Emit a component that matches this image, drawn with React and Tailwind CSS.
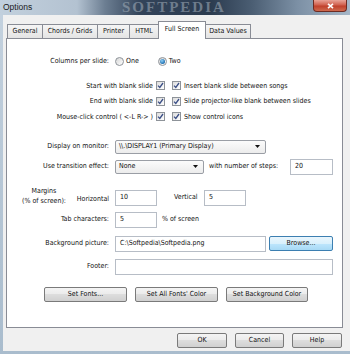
import React from "react";

const font = { fontFamily: '"DejaVu Sans Condensed", "Liberation Sans", sans-serif' };

function Check() {
  return (
    <span className="flex h-[9px] w-[9px] shrink-0 items-center justify-center border border-[#8e9399] bg-[linear-gradient(135deg,#dcdcdc,#ffffff)]">
      <svg width="7" height="7" viewBox="0 0 7 7">
        <path d="M1 3.6 L2.8 5.4 L6 1" fill="none" stroke="#3b4f86" strokeWidth="1.3" />
      </svg>
    </span>
  );
}

function Radio({ on }) {
  return (
    <span className="flex h-[9px] w-[9px] shrink-0 items-center justify-center rounded-full border border-[#8e9399] bg-[linear-gradient(135deg,#d6d6d6,#ffffff)]">
      {on && <span className="h-[5px] w-[5px] rounded-full bg-[radial-gradient(circle_at_40%_35%,#8fd0f7,#1d6fb2_70%,#144c80)]"></span>}
    </span>
  );
}

function Select({ value, w }) {
  return (
    <div className={`flex h-[14px] items-center justify-between rounded-[2px] border border-[#9a9ea5] bg-[linear-gradient(#fbfbfb,#ececec)] pl-[3px] pr-[5px] ${w}`}>
      <span>{value}</span>
      <svg width="5" height="3" viewBox="0 0 5 3">
        <path d="M0 0 H5 L2.5 3 Z" fill="#111" />
      </svg>
    </div>
  );
}

function Field({ value, w }) {
  return (
    <div className={`flex h-[16px] items-center border border-[#b7bdc6] bg-white pl-[4px] ${w}`}>
      {value}
    </div>
  );
}

function Btn({ children, w, blue }) {
  return (
    <div
      className={`flex h-[15px] items-center justify-center rounded-[2px] border ${w} ${
        blue
          ? "border-[#3c7fb1] bg-[linear-gradient(#eaf6fd,#d9f0fc_50%,#bee6fd_50%,#a7d9f5)]"
          : "border-[#7a7a7a] bg-[linear-gradient(#f4f4f4,#ebebeb_50%,#dddddd_50%,#d0d0d0)]"
      }`}
    >
      {children}
    </div>
  );
}

const tabs = [
  ["General", "w-[36px]"],
  ["Chords / Grids", "w-[56px]"],
  ["Printer", "w-[33px]"],
  ["HTML", "w-[30px]"],
  ["Full Screen", "w-[48px]"],
  ["Data Values", "w-[46px]"],
];

export default function App() {
  return (
    <div
      className="flex h-[354px] w-[350px] flex-col overflow-hidden bg-[linear-gradient(180deg,#c4d2df,#a9bccd)] text-[7px] text-[#111]"
      style={font}
    >
      {/* title bar */}
      <div className="relative flex h-[15px] shrink-0 items-center overflow-hidden bg-[linear-gradient(90deg,#c2d0dd_0%,#b3c2d1_22%,#6c7e92_30%,#33445a_40%,#2b3b4f_60%,#4b5e73_72%,#7c90a5_85%,#a5b6c7_100%)] pl-[3px]">
        <span className="relative z-10 text-[8.5px] text-[#1b1b1b]" style={{ fontFamily: '"Liberation Sans", sans-serif' }}>
          Options
        </span>
        <span
          className="absolute left-[122px] top-0 text-[15px] font-bold leading-[15px] tracking-[2px] text-[#9aa6b2] opacity-60"
          style={{ fontFamily: '"Liberation Serif", serif' }}
        >
          SOFTPEDIA
        </span>
        <div className="absolute right-[3px] top-0 flex h-[12px] w-[34px] items-center justify-center rounded-b-[4px] border border-t-0 border-[#6e2b22] bg-[linear-gradient(#e9a397,#d0604e_45%,#c0412c_55%,#cf6a4f)]">
          <svg width="7" height="6" viewBox="0 0 7 6">
            <path d="M1 0.8 L6 5.2 M6 0.8 L1 5.2" stroke="#fff" strokeWidth="1.6" />
          </svg>
        </div>
      </div>

      {/* client area */}
      <div className="ml-[3px] flex h-[336px] w-[347px] flex-col bg-[#f0f0f0]">
        <div className="flex h-[23px] items-end pl-[4px]">
          {tabs.map(([label, w], i) => {
            const active = label === "Full Screen";
            return (
              <div
                key={label}
                className={`flex items-center justify-center border border-b-0 border-[#898c95] ${w} ${i > 0 ? "-ml-px" : ""} ${
                  active
                    ? "relative z-10 -mb-px h-[18px] bg-white pb-[2px]"
                    : "h-[14px] bg-[linear-gradient(#f5f5f5,#e4e4e4)]"
                }`}
              >
                {label}
              </div>
            );
          })}
        </div>

        <div className="ml-[3px] flex h-[290px] w-[337px] flex-col border border-[#898c95] bg-white">
          {/* columns per slide */}
          <div className="mt-[15px] flex h-[14px] items-center">
            <span className="w-[102px] text-right">Columns per slide:</span>
            <span className="ml-[6px] flex items-center gap-[2px]">
              <Radio /> One
            </span>
            <span className="ml-[19px] flex items-center gap-[2px]">
              <Radio on /> Two
            </span>
          </div>

          {/* checkboxes */}
          <div className="mt-[10px] flex flex-col">
            {[
              ["Start with blank slide", "Insert blank slide between songs"],
              ["End with blank slide", "Slide projector-like blank between slides"],
              ["Mouse-click control ( <-L R-> )", "Show control icons"],
            ].map(([a, b]) => (
              <div key={a} className="flex h-[15.5px] items-center">
                <span className="w-[146px] text-right">{a}</span>
                <span className="ml-[3px]">
                  <Check />
                </span>
                <span className="ml-[7px] flex items-center gap-[3px]">
                  <Check /> {b}
                </span>
              </div>
            ))}
          </div>

          {/* display on monitor */}
          <div className="mt-[14px] flex h-[16px] items-center">
            <span className="w-[102px] text-right">Display on monitor:</span>
            <div className="ml-[6px]">
              <Select value={"\\\\.\\DISPLAY1 (Primary Display)"} w="w-[151px]" />
            </div>
          </div>

          {/* transition */}
          <div className="mt-[4px] flex h-[16px] items-center">
            <span className="w-[102px] text-right">Use transition effect:</span>
            <div className="ml-[6px]">
              <Select value="None" w="w-[89px]" />
            </div>
            <span className="ml-[5px] w-[81px]">with number of steps:</span>
            <Field value="20" w="w-[43px]" />
          </div>

          {/* margins */}
          <div className="mt-[10px] flex h-[21px] items-end">
            <div className="flex w-[102px] items-end justify-between">
              <div className="ml-[11px] flex w-[52px] flex-col items-center leading-[10px]">
                <span>Margins</span>
                <span>(% of screen):</span>
              </div>
              <span className="mb-[1px]">Horizontal</span>
            </div>
            <div className="ml-[6px]">
              <Field value="10" w="w-[42px]" />
            </div>
            <span className="mb-[3px] ml-[17px] w-[30px]">Vertical</span>
            <Field value="5" w="w-[42px]" />
          </div>

          {/* tab characters */}
          <div className="mt-[6px] flex h-[16px] items-center">
            <span className="w-[102px] text-right">Tab characters:</span>
            <div className="ml-[6px]">
              <Field value="5" w="w-[42px]" />
            </div>
            <span className="ml-[5px]">% of screen</span>
          </div>

          {/* background picture */}
          <div className="mt-[8px] flex h-[16px] items-center">
            <span className="w-[102px] text-right">Background picture:</span>
            <div className="ml-[6px]">
              <Field value={"C:\\Softpedia\\Softpedia.png"} w="w-[151px]" />
            </div>
            <div className="ml-[3px]">
              <Btn w="w-[64px]" blue>
                Browse...
              </Btn>
            </div>
          </div>

          {/* footer */}
          <div className="mt-[7px] flex h-[16px] items-center">
            <span className="w-[102px] text-right">Footer:</span>
            <div className="ml-[6px]">
              <Field value="" w="w-[218px]" />
            </div>
          </div>

          {/* font buttons */}
          <div className="ml-[37px] mt-[12px] flex gap-[8px]">
            <Btn w="w-[83px]">Set Fonts...</Btn>
            <Btn w="w-[83px]">Set All Fonts' Color</Btn>
            <Btn w="w-[82px]">Set Background Color</Btn>
          </div>
        </div>

        {/* dialog buttons */}
        <div className="mt-[5px] flex justify-end gap-[8px] pr-[8px]">
          <Btn w="w-[50px]">OK</Btn>
          <Btn w="w-[49px]">Cancel</Btn>
          <Btn w="w-[50px]">Help</Btn>
        </div>
      </div>
    </div>
  );
}
